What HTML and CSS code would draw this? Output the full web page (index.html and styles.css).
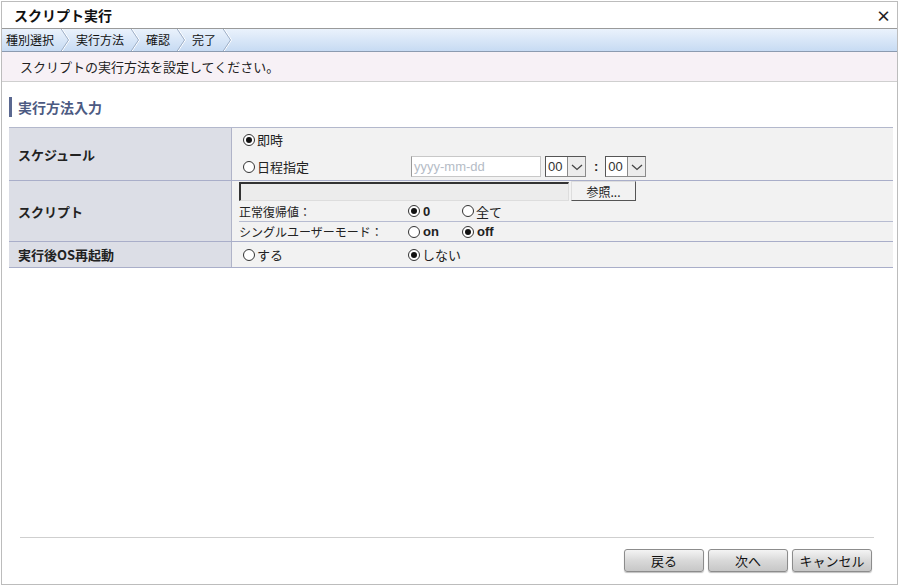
FILE: index.html
```html
<!DOCTYPE html>
<html lang="ja">
<head>
<meta charset="utf-8">
<link rel="stylesheet" href="styles.css">
</head>
<body>
<div class="dialog">
  <div class="titlebar">
    <span class="title">スクリプト実行</span>
    <span class="close">×</span>
  </div>
  <div class="steps">
    <span class="step">種別選択</span><svg class="chev" width="16" height="22" viewBox="0 0 16 22"><path d="M2.5 -1 L10.5 11 L2.5 23" fill="none" stroke="#fff" stroke-width="1"/><path d="M1.5 -1 L9.5 11 L1.5 23" fill="none" stroke="#9fb0c8" stroke-width="1"/></svg>
    <span class="step">実行方法</span><svg class="chev" width="16" height="22" viewBox="0 0 16 22"><path d="M2.5 -1 L10.5 11 L2.5 23" fill="none" stroke="#fff" stroke-width="1"/><path d="M1.5 -1 L9.5 11 L1.5 23" fill="none" stroke="#9fb0c8" stroke-width="1"/></svg>
    <span class="step">確認</span><svg class="chev" width="16" height="22" viewBox="0 0 16 22"><path d="M2.5 -1 L10.5 11 L2.5 23" fill="none" stroke="#fff" stroke-width="1"/><path d="M1.5 -1 L9.5 11 L1.5 23" fill="none" stroke="#9fb0c8" stroke-width="1"/></svg>
    <span class="step">完了</span><svg class="chev" width="16" height="22" viewBox="0 0 16 22"><path d="M2.5 -1 L10.5 11 L2.5 23" fill="none" stroke="#fff" stroke-width="1"/><path d="M1.5 -1 L9.5 11 L1.5 23" fill="none" stroke="#9fb0c8" stroke-width="1"/></svg>
  </div>
  <div class="message">スクリプトの実行方法を設定してください。</div>
  <div class="content">
    <h2 class="heading">実行方法入力</h2>
    <div class="form">
      <div class="row row-schedule">
        <div class="label">スケジュール</div>
        <div class="value schedule">
          <div class="line line-now"><span class="radio on"></span><span>即時</span></div>
          <div class="line line-date">
            <span class="radio"></span><span class="date-label">日程指定</span>
            <span class="date-input">yyyy-mm-dd</span>
            <span class="select"><span class="sel-val">00</span><span class="sel-btn"><svg width="14" height="10" viewBox="0 0 14 10"><path d="M2 3 L7 7.5 L12 3" fill="none" stroke="#444" stroke-width="1.3"/></svg></span></span>
            <span class="colon">:</span>
            <span class="select"><span class="sel-val">00</span><span class="sel-btn"><svg width="14" height="10" viewBox="0 0 14 10"><path d="M2 3 L7 7.5 L12 3" fill="none" stroke="#444" stroke-width="1.3"/></svg></span></span>
          </div>
        </div>
      </div>
      <div class="row row-script">
        <div class="label">スクリプト</div>
        <div class="value script">
          <div class="sub sub-file"><span class="file-input"></span><span class="browse">参照...</span></div>
          <div class="sub sub-opt"><span class="opt-label">正常復帰値：</span><span class="opt"><span class="radio on"></span><b>0</b></span><span class="opt"><span class="radio"></span>全て</span></div>
          <div class="sub sub-opt last"><span class="opt-label">シングルユーザーモード：</span><span class="opt"><span class="radio"></span><b>on</b></span><span class="opt"><span class="radio on"></span><b>off</b></span></div>
        </div>
      </div>
      <div class="row row-reboot">
        <div class="label">実行後OS再起動</div>
        <div class="value reboot">
          <span class="opt wide"><span class="radio"></span>する</span><span class="opt"><span class="radio on"></span>しない</span>
        </div>
      </div>
    </div>
  </div>
  <div class="footer">
    <div class="buttons">
      <button class="btn">戻る</button>
      <button class="btn">次へ</button>
      <button class="btn">キャンセル</button>
    </div>
  </div>
</div>
</body>
</html>
```
FILE: styles.css
```css
* { box-sizing: border-box; }
html, body { margin: 0; padding: 0; background: #fff; }
body {
  font-family: "Noto Sans CJK JP", "Liberation Sans", sans-serif;
  font-size: 13px;
  color: #222;
  width: 900px;
  height: 586px;
  overflow: hidden;
}
.dialog {
  margin: 1px 0 0 1px;
  width: 897px;
  height: 584px;
  border: 1px solid #bcbcbc;
  display: flex;
  flex-direction: column;
}
.titlebar {
  height: 27px;
  border-bottom: 1px solid #9a9a9a;
  display: flex;
  align-items: center;
  justify-content: space-between;
  padding: 0 6px 0 12px;
}
.title { font-weight: bold; font-size: 14px; color: #111; }
.close { font-weight: bold; font-size: 15px; color: #222; line-height: 1; }
.steps {
  height: 23px;
  background: linear-gradient(#eaf2fc, #c7dbf3);
  border-bottom: 1px solid #8c9bb0;
  display: flex;
  align-items: center;
  padding-left: 3px;
  font-size: 12px;
}
.step { padding: 0 0 0 1px; line-height: 22px; color: #111; }
.chev { margin: 0 0 0 5px; display: block; }
.message {
  height: 30px;
  background: #f7f1f6;
  border-bottom: 1px solid #cfcfcf;
  padding-left: 18px;
  display: flex;
  align-items: center;
  font-size: 13px;
  color: #222;
}
.content { padding: 15px 4px 0 7px; flex: 1; }
.heading {
  margin: 0 0 10px 0;
  font-size: 14px;
  font-weight: bold;
  color: #4c5a82;
  border-left: 3px solid #5a6890;
  padding-left: 6px;
  height: 20px;
  line-height: 20px;
}
.form { border-top: 1px solid #b3b8cc; }
.row {
  display: flex;
  border-bottom: 1px solid #a9aec9;
}
.label {
  width: 223px;
  background: #dcdee6;
  border-right: 1px solid #b0b4c8;
  font-weight: bold;
  font-size: 13px;
  padding-left: 9px;
  display: flex;
  align-items: center;
  color: #222;
}
.value { flex: 1; background: #f2f2f2; }
.row-schedule { height: 53px; }
.schedule { padding-left: 11px; display: flex; flex-direction: column; }
.line { display: flex; align-items: center; }
.line-now { height: 25px; padding-bottom: 2px; }
.line-date { height: 27px; }
.date-label { width: 154px; }
.radio {
  width: 12px; height: 12px;
  border: 1px solid #333;
  border-radius: 50%;
  display: inline-block;
  background: #fff;
  margin-right: 2px;
  position: relative;
  flex: none;
}
.radio.on::after {
  content: "";
  position: absolute;
  left: 2px; top: 2px;
  width: 6px; height: 6px;
  border-radius: 50%;
  background: #111;
}
.date-input {
  width: 130px; height: 21px;
  background: #fff;
  border: 1px solid #c8c8c8;
  border-left-color: #999;
  color: #b5bcc6;
  font-family: "Liberation Sans", sans-serif;
  font-size: 13px;
  padding-left: 2px;
  line-height: 19px;
}
.select {
  margin-left: 4px;
  display: flex;
  height: 21px;
  border: 1px solid #8a8a8a;
  border-top-color: #555;
  border-left-color: #555;
  background: #fff;
}
.sel-val {
  width: 21px;
  font-family: "Liberation Sans", sans-serif;
  font-size: 13px;
  line-height: 19px;
  padding-left: 2px;
  color: #333;
}
.sel-btn {
  width: 18px;
  border-left: 1px solid #8a8a8a;
  background: #ececec;
  display: flex; align-items: center; justify-content: center;
}
.colon { margin: 0 3px 0 8px; font-weight: bold; font-family: "Liberation Sans", sans-serif; }
.row-script { height: 61px; }
.script { display: flex; flex-direction: column; padding-left: 7px; }
.sub { display: flex; align-items: center; }
.sub-file { height: 20px; }
.file-input {
  width: 330px; height: 19px;
  border-top: 2px solid #333;
  border-left: 2px solid #333;
  border-right: 1px solid #ddd;
  border-bottom: 1px solid #ddd;
  background: #ececec;
}
.browse {
  margin-left: 2px;
  width: 65px; height: 20px;
  border: 1px solid #555;
  border-top-color: #ddd;
  border-left-color: #ddd;
  background: #f2f2f2;
  display: flex; align-items: center; justify-content: center;
  font-size: 12px;
}
.sub-opt { height: 20px; border-top: 1px solid #b7bcd1; }
.sub-file + .sub-opt { border-top: none; }
.sub-opt .opt-label { width: 169px; font-size: 12px; }
.opt { display: inline-flex; align-items: center; width: 54px; }
.opt b { font-family: "Liberation Sans", sans-serif; font-size: 13px; font-weight: bold; margin-left: 1px; }
.row-reboot { height: 26px; }
.reboot { display: flex; align-items: center; padding-left: 11px; }
.opt.wide { width: 165px; }
.reboot .opt:last-child { width: auto; }
.footer { padding: 0 23px 12px 18px; }
.footer .buttons {
  border-top: 1px solid #cfcfcf;
  padding: 11px 2px 0 0;
  display: flex;
  justify-content: flex-end;
  gap: 4px;
}
.btn {
  width: 80px; height: 23px;
  border: 1px solid #8c8c8c;
  border-radius: 3px;
  background: linear-gradient(#f4f4f4, #d9d9d9 50%, #c7c7c7);
  font-family: "Noto Sans CJK JP", sans-serif;
  font-size: 13px;
  color: #111;
  padding: 0;
  box-shadow: 0 1px 1px rgba(0,0,0,0.25);
}
```
